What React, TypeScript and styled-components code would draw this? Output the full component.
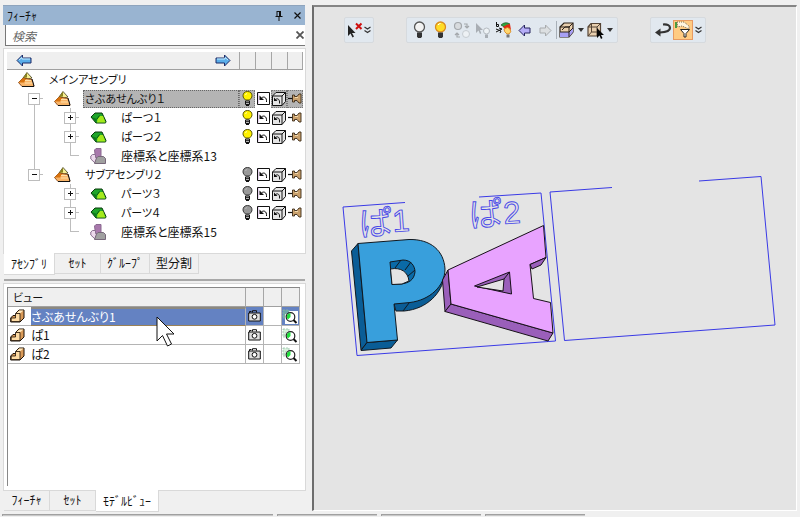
import React from "react";
import styled, { createGlobalStyle, css } from "styled-components";

const GlobalStyle = createGlobalStyle`
  * { box-sizing: border-box; }
  body {
    margin: 0;
    background: #f0f0f0;
    color: #111;
    font-family: "Noto Sans CJK JP", "Noto Sans", sans-serif;
    font-size: 12px;
    line-height: 16px;
    overflow: hidden;
  }
  button, input, table { font: inherit; color: inherit; }
  button { border: 0; padding: 0; background: none; }
  svg { display: block; flex: none; }
`;

const Window = styled.div`
  display: flex;
  flex-direction: column;
  height: 100vh;
`;

const Workspace = styled.main`
  display: flex;
  flex: 1;
  min-height: 0;
  gap: 6px;
  padding: 5px 3px 2px 3px;
`;

const Side = styled.aside`
  display: flex;
  flex-direction: column;
  flex: none;
  width: 303px;
`;

const TitleBar = styled.header`
  display: flex;
  align-items: center;
  gap: 8px;
  height: 20px;
  margin-right: 1px;
  padding: 0 3px 0 4px;
  background: #99b4d1;
  border-top: 1px solid #8ea4bd;
`;

const Title = styled.h1`
  flex: 1;
  margin: 0;
  font-size: 12px;
  font-weight: 400;
`;

const IconButton = styled.button`
  display: flex;
  align-items: center;
  justify-content: center;
  min-width: 10px;
  height: 16px;
`;

const SearchBar = styled.div`
  display: flex;
  align-items: center;
  height: 21px;
  margin: 0 1px 0 2px;
  background: #fff;
  border-left: 1px solid #777;
  border-bottom: 1px solid #777;
`;

const SearchInput = styled.input`
  flex: 1;
  min-width: 0;
  height: 18px;
  padding: 0 6px;
  border: 0;
  outline: 0;
  background: transparent;
  font-style: italic;
  &::placeholder { color: #666; opacity: 1; }
`;

const Pane = styled.section<{ $grow?: boolean }>`
  display: flex;
  flex-direction: column;
  flex: ${(p) => (p.$grow ? "1" : "none")};
  min-height: 0;
  margin-top: 2px;
  padding: 3px 2px 0 3px;
  background: #fff;
  border: 1px solid #d9d9d9;
`;

const TreeHeader = styled.div`
  display: flex;
  height: 18px;
  background: #efefef;
  border-bottom: 1px solid #a0a0a0;
`;

const HeaderNav = styled.div`
  display: flex;
  flex: 1;
  align-items: center;
  justify-content: space-between;
  padding: 0 8px 0 9px;
`;

const HeaderCell = styled.div`
  width: 16px;
  border-left: 1px solid #a6a6a6;
  &:last-child { border-right: 1px solid #a6a6a6; }
`;

const Tree = styled.div`
  padding: 0 0 12px;
`;

const TreeRow = styled.div`
  display: flex;
  align-items: center;
  height: 19px;
  padding-left: 9px;
`;

type GuideKind = "line" | "blank" | "node" | "elbow" | "first";

const Guide = styled.span<{ $kind: GuideKind }>`
  display: flex;
  align-items: center;
  justify-content: center;
  align-self: stretch;
  width: 36px;
  ${(p) => {
    const v = "linear-gradient(#bdbdbd, #bdbdbd) 18px 0 / 1px";
    const h = "linear-gradient(#bdbdbd, #bdbdbd) 18px 9px / 9px 1px no-repeat";
    if (p.$kind === "line") return css`background: ${v} 100% no-repeat;`;
    if (p.$kind === "node") return css`background: ${v} 100% no-repeat, ${h};`;
    if (p.$kind === "elbow") return css`background: ${v} 9px no-repeat, ${h};`;
    if (p.$kind === "first") return css`background: linear-gradient(#bdbdbd, #bdbdbd) 18px 9px / 1px 10px no-repeat, ${h};`;
    return "";
  }}
`;

const Expander = styled.button`
  display: flex;
  align-items: center;
  justify-content: center;
  width: 12px;
  height: 12px;
  background: #fff;
  border: 1px solid #bdbdbd;
`;

const NodeIcon = styled.span`
  width: 31px;
  padding-left: 2px;
`;

const NodeLabel = styled.span<{ $selected?: boolean; $kanji?: boolean }>`
  flex: 1;
  height: 18px;
  padding-left: 2px;
  font-size: ${(p) => (p.$kanji ? 12 : 11)}px;
  line-height: 17px;
  white-space: nowrap;
  font-feature-settings: "palt";
  ${(p) =>
    p.$selected &&
    css`
      background: #b4b4b4;
      outline: 1px dotted #666;
      outline-offset: -1px;
    `}
`;

const ToggleCell = styled.button<{ $selected?: boolean }>`
  display: flex;
  align-items: center;
  justify-content: center;
  width: 16px;
  height: 18px;
  ${(p) =>
    p.$selected &&
    css`
      background: #b4b4b4;
      outline: 1px dotted #777;
      outline-offset: -1px;
    `}
`;

const Tabs = styled.div`
  display: flex;
  align-items: flex-start;
  margin-top: -1px;
  padding-left: 1px;
`;

const Tab = styled.button<{ $active?: boolean }>`
  min-width: 46px;
  height: 21px;
  padding: 0 6px;
  line-height: 18px;
  white-space: nowrap;
  border: 1px solid #d9d9d9;
  border-width: 0 1px 1px 0;
  ${(p) =>
    p.$active &&
    css`
      height: 22px;
      padding: 0 7px;
      background: #fff;
    `}
`;

const Splitter = styled.div`
  height: 2px;
  margin: 4px 1px 0;
  background: #a8a8a8;
`;

const ViewList = styled.div`
  flex: 1;
  margin-bottom: 4px;
  margin-right: 3px;
  border-left: 1px solid #888;
  border-top: 1px solid #888;
`;

const ViewTable = styled.table`
  width: 100%;
  table-layout: fixed;
  border-collapse: separate;
  border-spacing: 0;
  col.icon { width: 23px; }
  col.action { width: 18px; }
`;

const Th = styled.th`
  height: 19px;
  padding: 0 0 0 5px;
  background: #efefef;
  border-right: 1px solid #a6a6a6;
  border-bottom: 1px solid #a0a0a0;
  line-height: 16px;
  text-align: left;
  font-weight: 400;
  font-size: 11px;
  font-feature-settings: "palt";
`;

const Td = styled.td<{ $tone?: "selected" | "active"; $divided?: boolean }>`
  position: relative;
  height: 19px;
  padding: 0;
  line-height: 16px;
  white-space: nowrap;
  font-feature-settings: "palt";
  border-bottom: 1px solid #b4b4b4;
  border-right: ${(p) => (p.$divided ? "1px solid #b4b4b4" : "0")};
  ${(p) =>
    p.$tone === "selected" &&
    css`
      color: #fff;
      background: #6482c2;
      border-top: 2px solid #8b8880;
      border-bottom-color: #9a8155;
    `}
  ${(p) => p.$tone === "active" && css`background: #6482c2;`}
`;

const IconTd = styled(Td)`
  padding-left: 2px;
`;

const Pointer = styled.svg`
  position: absolute;
  z-index: 1;
  left: 125px;
  top: 7px;
`;

const Viewport = styled.section`
  position: relative;
  flex: 1;
  min-width: 0;
  margin-bottom: 1px;
  background: #e4e4e4;
  border-left: 2px solid #6d6d6d;
  border-top: 2px solid #858585;
  border-right: 1px solid #fff;
  border-bottom: 1px solid #fff;
`;

const Scene = styled.svg`
  width: 100%;
  height: 100%;
`;

const ToolbarDock = styled.div`
  position: absolute;
  left: 30px;
  top: 10px;
  display: flex;
  gap: 32px;
`;

const Toolbar = styled.div`
  display: flex;
  align-items: center;
  height: 26px;
  padding: 0 2px;
  background: #e1e8ef;
  border: 1px solid #d6dade;
  border-radius: 2px;
`;

const Tool = styled.button<{ $w?: number; $on?: boolean }>`
  display: flex;
  align-items: center;
  justify-content: center;
  width: ${(p) => p.$w ?? 21}px;
  height: 20px;
  ${(p) =>
    p.$on &&
    css`
      background: #ffcb83;
      border: 1px solid #e79a62;
    `}
`;

const ToolDivider = styled.span`
  width: 1px;
  height: 18px;
  background: #a8b0b8;
`;

const StatusBar = styled.footer`
  display: grid;
  grid-template-columns: 271px 100px 100px 100px;
  gap: 4px;
  height: 3px;
  padding: 0 2px;
`;

const StatusCell = styled.div`
  border-top: 1px solid #a0a0a0;
  border-left: 1px solid #a0a0a0;
  background: #c8c8c8;
  height: 2px;
`;

/* ---------- icons ---------- */

const NavArrow = ({ right }: { right?: boolean }) => (
  <svg width="16" height="13" viewBox="0 0 16 13">
    <g transform={right ? "translate(16 0) scale(-1 1)" : undefined}>
      <path d="M1 6.5 6.5 1v3H15v5H6.500v3Z" fill="#5aaeea" stroke="#1d2a66" />
      <path d="M3 6 6 3.500V5h8" fill="none" stroke="#c4ecff" />
    </g>
  </svg>
);

const AssemblyIcon = () => (
  <svg width="17" height="15" viewBox="0 0 17 15">
    <path d="M9 .5 5 6l5 1 4-1Z" fill="#f6ef92" stroke="#3c3720" strokeWidth=".8" />
    <path d="M9 .5 5 6l4-.5Z" fill="#8a8420" />
    <path d="M5 6 .5 10.500 4 14.500h12L14 7.500Z" fill="#f8b468" stroke="#7a3605" strokeWidth=".8" />
    <path d="M5 6 .5 10.500H6L8 7Z" fill="#d8720e" />
    <path d="M7 11h8M7 8.500h6" stroke="#ffe0a8" />
    <path d="M4 14.500h12M14 7l2 7" stroke="#111" fill="none" />
  </svg>
);

const PartIcon = () => (
  <svg width="17" height="12" viewBox="0 0 17 12">
    <path d="M1 5 5 1h7l4 8.500-.5 1.500H6Z" fill="#1fa52a" stroke="#0a3a0c" />
    <path d="M7.500 7 10 4h3l2.500 6.500H7Z" fill="#a4ea1c" />
    <path d="M1.500 5 7 7l-1 3.500Z" fill="#0c7a1c" />
    <path d="M7 7 9.500 3.500" stroke="#0a5a0c" />
  </svg>
);

const AxisIcon = () => (
  <svg width="17" height="16" viewBox="0 0 17 16">
    <path d="M4.500 2 6 .5h5v9H5.500Z" fill="#a878ac" stroke="#8a6a90" />
    <path d="M.8 8 2.500 6.500h3v3l1.500 1-2 4.500-4.200-4Z" fill="#ecd9ec" stroke="#8a7090" />
    <path d="m6.500 10 1.500-1.500h5.500l2 2v5H4.500Z" fill="#a0a0a0" stroke="#77687a" />
  </svg>
);

const TreeBulb = ({ on }: { on?: boolean }) => (
  <svg width="11" height="15" viewBox="0 0 11 15">
    <path d="M5.500.500C2.500.500 1 2.500 1 4.800c0 2 1.500 3 2.500 4.200h4C8.500 7.800 10 6.800 10 4.800 10 2.500 8.500.500 5.500.500Z" fill={on ? "#fff200" : "#999"} stroke={on ? "#575300" : "#333"} />
    <path d="M3.500 10h4v3.500h-4Z" fill="#ddd" stroke="#111" />
    <path d="M4 11.700h3M4 14.500h3" stroke="#111" />
    <path d="M3.500 4Q4 2.500 5 2.500" fill="none" stroke={on ? "#ffffb0" : "#bbb"} />
  </svg>
);

const UndoBox = () => (
  <svg width="13" height="13" viewBox="0 0 13 13">
    <path d="M.5.500h12v12H.5Z" fill="#fff" stroke="#111" />
    <path d="M1.500 1v10.500" stroke="#e7d2f1" />
    <path d="M2.500 3.500V8H7Z" fill="#111" />
    <path d="M4.500 6C6.500 4 10 5 9.500 10" fill="none" stroke="#111" />
  </svg>
);

const UndoCube = () => (
  <svg width="14" height="14" viewBox="0 0 14 14">
    <path d="M.5 4 4 .5h9.500v9L10 13.500H.5Z" fill="#e6e6e6" stroke="#111" />
    <path d="M.5 4H10v9.500M10 4l3.500-3.500" fill="none" stroke="#111" />
    <path d="M2 5.500V9h3.500Z" fill="#111" />
    <path d="M3.500 7.500C5.500 6 8 7 7.500 11.500" fill="none" stroke="#111" />
  </svg>
);

const PushPin = () => (
  <svg width="14" height="11" viewBox="0 0 14 11">
    <path d="M0 5.500h5" stroke="#111" strokeWidth="1.200" />
    <path d="M4.500 2h2v1.500H9l2-2.500h2v9h-2L9 7.500H6.500V9h-2Z" fill="#c9a06c" stroke="#3b2a17" strokeWidth=".9" />
    <path d="M7 4.500h3" stroke="#f0d8ac" />
  </svg>
);

const StepIcon = () => (
  <svg width="15" height="14" viewBox="0 0 15 14">
    <path d="M.7 9 3 6.500h3V4L9 1h5v8l-4 4H.7Z" fill="#d99a58" stroke="#1d1208" />
    <path d="M1.200 9H5.500V4.500H10V12.500H1.200Z" fill="#ffdca4" stroke="#1d1208" strokeWidth=".8" />
    <path d="M6.500 4 9.300 1.500H13.500L10.500 4Z" fill="#ffe9bd" />
  </svg>
);

const CameraIcon = () => (
  <svg width="13" height="12" viewBox="0 0 13 12">
    <path d="M4.500 2.500V.7h4v1.800M1.500 3V1.500h2" fill="none" stroke="#111" />
    <path d="M.7 3h11.600v8H.7Z" fill="#ddd" stroke="#111" />
    <circle cx="6.500" cy="6.800" r="2.400" fill="#fff" stroke="#111" />
  </svg>
);

const ZoomIcon = ({ lit }: { lit?: boolean }) => (
  <svg width="16" height="15" viewBox="0 0 16 15">
    {lit && <path d="M3 2h13v13H3Z" fill="#fff" />}
    <path d="M1 1h6v4H3v4H1Z" fill={lit ? "#6ea6a8" : "#d7f0dc"} stroke="#8cbca2" strokeWidth=".7" strokeDasharray="2 1" />
    <circle cx="8.500" cy="8" r="4.300" fill="#fff" stroke="#222" strokeWidth="1.200" />
    <path d="M8.500 8V4.300A3.700 3.700 0 0 0 4.800 8 3.700 3.700 0 0 0 6 10.500Z" fill="#1fe03c" />
    <path d="m11.500 11 3 3" stroke="#111" strokeWidth="2" />
  </svg>
);

const ToolBulb = ({ fill }: { fill: string }) => (
  <svg width="13" height="18" viewBox="0 0 13 18">
    <circle cx="6.500" cy="6" r="5" fill={fill} stroke={fill === "#f2f2f2" ? "#555" : "#d98b20"} strokeWidth="1.300" />
    <path d="M4 11.500h5v4l-1 1.500H5l-1-1.500Z" fill="#333" />
    <path d="M4 4Q5 2.500 6.500 2.500" fill="none" stroke="#fff" />
  </svg>
);

const Chevrons = () => (
  <svg width="7" height="8" viewBox="0 0 7 8">
    <path d="m.5 1 3 2 3-2m-6 3.500 3 2 3-2" fill="none" stroke="#333" strokeWidth="1.200" />
  </svg>
);

const Caret = () => (
  <svg width="6" height="4" viewBox="0 0 6 4"><path d="M0 0h6L3 4Z" fill="#333" /></svg>
);

const ClearSelect = () => (
  <svg width="16" height="16" viewBox="0 0 16 16">
    <path d="M1 3v11l2.500-2.500L5.500 15.500 7 14.500 5 11h3.500Z" fill="#222" />
    <path d="m9 1.500 5.500 5.500m0-5.500L9 7" stroke="#cf1010" strokeWidth="2" />
  </svg>
);

const SwapIcon = () => (
  <svg width="18" height="18" viewBox="0 0 18 18">
    <circle cx="5" cy="5" r="3.500" fill="#d8dbde" stroke="#a4a8ac" strokeWidth="1.200" />
    <circle cx="13" cy="13" r="3.500" fill="#edf1f4" stroke="#c6ccd1" />
    <path d="M11 3h3v4m-2-2 2 2 2-2M7 16H4v-4m-2 2 2-2 2 2" fill="none" stroke="#a4a8ac" strokeWidth="1.200" />
  </svg>
);

const PickBulb = () => (
  <svg width="17" height="17" viewBox="0 0 17 17">
    <path d="M2 1v10l2.500-2.500L6 12l1.300-.7L6 8h3Z" fill="#a9aeb4" />
    <circle cx="12.500" cy="9" r="3" fill="#edf2f5" stroke="#b4bac0" />
    <path d="M11 12.500h3v3.500h-3Z" fill="#a9aeb4" />
  </svg>
);

const ColorBulb = () => (
  <svg width="17" height="18" viewBox="0 0 17 18">
    <path d="M6 4Q10 0 15 3l-4 4Z" fill="#31a43d" stroke="#184d1f" strokeWidth=".7" />
    <path d="M8 6q4-3 7-3l1 6-3-2-3 1Z" fill="#e32914" />
    <path d="M9 8q4-3 6 0 2 3-1 5h-2q-3-2-3-5Z" fill="#ffd76e" stroke="#d47c15" strokeWidth=".8" />
    <path d="M11.500 13.500h3v3h-3Z" fill="#777" />
    <path d="M1.500 1v4.500h2V3.500h-2M1 11l6-3-3-1M1 8l5 2-1 2" fill="none" stroke="#111" />
  </svg>
);

const BlockArrow = ({ right }: { right?: boolean }) => (
  <svg width="13" height="13" viewBox="0 0 13 13">
    <path
      d={right ? "M12 6.500 6.500 1v3H1v5h5.500v3Z" : "M1 6.500 6.500 1v3H12v5H6.500v3Z"}
      fill={right ? "#dcdfe1" : "#b5adf7"}
      stroke={right ? "#a8abad" : "#26245e"}
    />
  </svg>
);

const SectionCube = () => (
  <svg width="15" height="16" viewBox="0 0 15 16">
    <path d="M1 5 5 1h9v9l-4 5H1Z" fill="#e8cfae" stroke="#2b2118" strokeWidth="1.200" />
    <path d="M1 10h9l4-4v4l-4 5H1Z" fill="#a8a0f4" />
    <path d="M1 5h9v10M10 5l4-4M1 10h9l4-4M3 8l3-3h5" fill="none" stroke="#2b2118" />
  </svg>
);

const CubePick = () => (
  <svg width="17" height="17" viewBox="0 0 17 17">
    <path d="M1 5 4 1.500h9.500V10L10 14H1Z" fill="#e8cfae" stroke="#554434" strokeWidth="1.200" />
    <path d="M1 5h9v9M10 5l3.500-3.500M4.500 1.500V10h9M1 14l3.500-4" fill="none" stroke="#554434" />
    <path d="M10 6v10l2.500-2.500L14 17l1.500-1-1.500-3h3Z" fill="#050505" />
  </svg>
);

const ReturnIcon = () => (
  <svg width="18" height="14" viewBox="0 0 18 14">
    <path d="M9 1.500q7-.5 7 3.500T6 9.500" fill="none" stroke="#333" strokeWidth="2.200" />
    <path d="M1 9.500 6.500 5.500v8Z" fill="#333" />
  </svg>
);

const FilterIcon = () => (
  <svg width="18" height="18" viewBox="0 0 18 18">
    <path d="M1 1h2v6H1Z" fill="#4b9b3d" />
    <path d="M3 1h7l5 4v3L8 5 4 6Z" fill="#fff5df" stroke="#7b6b55" strokeDasharray="1 1" />
    <path d="M6.500 8.500h9l-3.500 4V16h-2v-3.500Z" fill="#fff" stroke="#222" />
  </svg>
);

/* ---------- data ---------- */

type Kind = "assembly" | "part" | "axis";
interface TreeItem {
  label: string;
  kind: Kind;
  guides: GuideKind[];
  expand?: "+" | "-";
  lit?: boolean;
  selected?: boolean;
}

const treeItems: TreeItem[] = [
  { label: "メインアセンブリ", kind: "assembly", guides: [] },
  { label: "さぶあせんぶり１", kind: "assembly", guides: ["first"], expand: "-", lit: true, selected: true },
  { label: "ぱーつ１", kind: "part", guides: ["line", "node"], expand: "+", lit: true },
  { label: "ぱーつ２", kind: "part", guides: ["line", "node"], expand: "+", lit: true },
  { label: "座標系と座標系13", kind: "axis", guides: ["line", "elbow"] },
  { label: "サブアセンブリ２", kind: "assembly", guides: ["elbow"], expand: "-" },
  { label: "パーツ３", kind: "part", guides: ["blank", "node"], expand: "+" },
  { label: "パーツ４", kind: "part", guides: ["blank", "node"], expand: "+" },
  { label: "座標系と座標系15", kind: "axis", guides: ["blank", "elbow"] },
];

const views = ["さぶあせんぶり1", "ぱ1", "ぱ2"];

const kindIcon: Record<Kind, React.ReactNode> = {
  assembly: <AssemblyIcon />,
  part: <PartIcon />,
  axis: <AxisIcon />,
};

const FeatureRow = ({ item }: { item: TreeItem }) => (
  <TreeRow role="treeitem" aria-selected={!!item.selected}>
    {item.guides.map((kind, i) => (
      <Guide key={i} $kind={kind}>
        {item.expand && i === item.guides.length - 1 && (
          <Expander aria-label={item.expand === "+" ? "展開" : "折りたたみ"}>
            <svg width="7" height="7" viewBox="0 0 7 7">
              <path d={item.expand === "+" ? "M1 3.500h5M3.500 1v5" : "M1 3.500h5"} stroke="#111" />
            </svg>
          </Expander>
        )}
      </Guide>
    ))}
    <NodeIcon>{kindIcon[item.kind]}</NodeIcon>
    <NodeLabel $selected={item.selected} $kanji={item.kind === "axis"}>{item.label}</NodeLabel>
    {item.expand && (
      <>
        <ToggleCell $selected={item.selected} aria-label="表示"><TreeBulb on={item.lit} /></ToggleCell>
        <ToggleCell aria-label="戻す"><UndoBox /></ToggleCell>
        <ToggleCell $selected={item.selected} aria-label="形状を戻す"><UndoCube /></ToggleCell>
        <ToggleCell $selected={item.selected} aria-label="固定"><PushPin /></ToggleCell>
      </>
    )}
  </TreeRow>
);

const ModelScene = () => (
  <Scene aria-label="モデル">
    <g transform="translate(-314 -7)" strokeLinejoin="round">
      <g fill="none" stroke="#3a3ae6" strokeWidth="1">
        <path d="M405 202.500 343 207l14 148.500L555.500 341 541 193l-62 4" />
        <path d="M612 187.500 550 192l14.500 148.500L775 325 761 176.500l-62 4.500" />
      </g>
      <g fill="none" stroke="#4747e8" strokeWidth=".9" fontFamily="'Noto Sans CJK JP', sans-serif" fontSize="33">
        <text transform="translate(360 236) rotate(-4)">ぱ</text>
        <text transform="translate(393 232) rotate(-4)" fontFamily="'Liberation Sans', sans-serif" fontSize="31">1</text>
        <text transform="translate(470 227) rotate(-4)">ぱ</text>
        <text transform="translate(504 224) rotate(-4)" fontFamily="'Liberation Sans', sans-serif" fontSize="31">2</text>
      </g>
      <g stroke="#101820" strokeWidth="1">
        <path d="M394 304 396 311h8C428 309 442 292 444 277L430 290Z" fill="#0a5d96" />
        <path d="M358 243.500 351.500 251 361 350l6-7.500Z" fill="#0a5d96" />
        <path d="m367 342.500-6 8 30-2.500 6.500-8Z" fill="#0a5d96" />
        <path d="M358 243.500 409 239.500C431 239 444 251 445 269 445 286 430 300 410 302.500L394 304 397.500 340 367 342.500Z" fill="#389fdc" />
        <path d="M390 262 403 260C411 260 415 266 415 272 414 280 409 283 401 284L392 284.500Z" fill="#0a6aa7" />
        <path d="M390.500 269C401 267 408 272 409 281L402 284 392 284.500Z" fill="#e4e4e4" />
        <path d="m395 268 6-8m4 10 6-8m-3 14 7-6M403 311l6-8" fill="none" />
      </g>
      <g stroke="#171018" strokeWidth="1">
        <path d="M448 270 442.500 280 445 311.500 451 304Z" fill="#9a5fba" />
        <path d="m451 304-6 7.500 103 29.500 5-8Z" fill="#9a5fba" />
        <path d="M448 270 543.500 225.500 546 257.500 530 264.500 533.500 298.500 550.500 302.500 553 333 451 304Z" fill="#e8a3ff" />
        <path d="M530 264.500 546 257.500 541 265 532 269Z" fill="#9a5fba" />
        <path d="m474.500 286 35-14 2 22Z" fill="#9a5fba" />
        <path d="m477 287 27-8-1 12Z" fill="#e4e4e4" />
        <path d="m504 279 5.500-7" fill="none" />
      </g>
    </g>
  </Scene>
);

export default function App() {
  return (
    <>
      <GlobalStyle />
      <Window>
        <Workspace>
          <Side>
            <TitleBar>
              <Title>ﾌｨｰﾁｬ</Title>
              <IconButton aria-label="ピン留め">
                <svg width="8" height="10" viewBox="0 0 8 10"><path d="M2 0v5.500m3.500-5.500v5.500M4.500 0v5.500M2 .500h4M.5 5.500h7M4 6v4" fill="none" stroke="#111" /></svg>
              </IconButton>
              <IconButton aria-label="閉じる">
                <svg width="7" height="7" viewBox="0 0 7 7"><path d="m.5.500 6 6m0-6-6 6" stroke="#111" strokeWidth="1.200" /></svg>
              </IconButton>
            </TitleBar>
            <SearchBar>
              <SearchInput aria-label="検索" placeholder="検索" />
              <IconButton aria-label="クリア">
                <svg width="8" height="8" viewBox="0 0 8 8"><path d="m.5.500 7 7m0-7-7 7" stroke="#555" strokeWidth="1.800" /></svg>
              </IconButton>
            </SearchBar>
            <Pane>
              <TreeHeader>
                <HeaderNav>
                  <IconButton aria-label="前へ"><NavArrow /></IconButton>
                  <IconButton aria-label="次へ"><NavArrow right /></IconButton>
                </HeaderNav>
                <HeaderCell /><HeaderCell /><HeaderCell /><HeaderCell />
              </TreeHeader>
              <Tree role="tree">
                {treeItems.map((item) => <FeatureRow key={item.label} item={item} />)}
              </Tree>
            </Pane>
            <Tabs>
              <Tab $active>ｱｾﾝﾌﾞﾘ</Tab>
              <Tab>ｾｯﾄ</Tab>
              <Tab>ｸﾞﾙｰﾌﾟ</Tab>
              <Tab>型分割</Tab>
            </Tabs>
            <Splitter />
            <Pane $grow>
              <ViewList>
                <ViewTable>
                  <colgroup>
                    <col className="icon" /><col /><col className="action" /><col className="action" /><col className="action" />
                  </colgroup>
                  <thead>
                    <tr><Th colSpan={2}>ビュー</Th><Th /><Th /><Th /></tr>
                  </thead>
                  <tbody>
                    {views.map((name, i) => (
                      <tr key={name}>
                        <IconTd><StepIcon /></IconTd>
                        <Td $divided $tone={i === 0 ? "selected" : undefined}>
                          {name}
                          {i === 0 && (
                            <Pointer width="19" height="31" viewBox="0 0 19 31" aria-hidden="true">
                              <path d="M1 1v24l5.500-5.500L11.500 30l4-2-5-10H18Z" fill="#fff" stroke="#111" />
                            </Pointer>
                          )}
                        </Td>
                        <IconTd $divided $tone={i === 0 ? "active" : undefined}><IconButton aria-label="撮影"><CameraIcon /></IconButton></IconTd>
                        <Td $divided />
                        <Td $divided $tone={i === 0 ? "active" : undefined}><IconButton aria-label="拡大"><ZoomIcon lit={i === 0} /></IconButton></Td>
                      </tr>
                    ))}
                  </tbody>
                </ViewTable>
              </ViewList>
            </Pane>
            <Tabs>
              <Tab>ﾌｨｰﾁｬ</Tab>
              <Tab>ｾｯﾄ</Tab>
              <Tab $active>ﾓﾃﾞﾙﾋﾞｭｰ</Tab>
            </Tabs>
          </Side>
          <Viewport>
            <ModelScene />
            <ToolbarDock>
              <Toolbar>
                <Tool $w={16} aria-label="選択解除"><ClearSelect /></Tool>
                <Tool $w={8} aria-label="その他"><Chevrons /></Tool>
              </Toolbar>
              <Toolbar>
                <Tool aria-label="非表示"><ToolBulb fill="#f2f2f2" /></Tool>
                <Tool aria-label="表示"><ToolBulb fill="#ffdc27" /></Tool>
                <Tool aria-label="反転"><SwapIcon /></Tool>
                <Tool aria-label="選択表示"><PickBulb /></Tool>
                <Tool aria-label="色表示"><ColorBulb /></Tool>
                <Tool aria-label="前へ"><BlockArrow /></Tool>
                <Tool aria-label="次へ"><BlockArrow right /></Tool>
                <ToolDivider />
                <Tool $w={19} aria-label="断面"><SectionCube /></Tool>
                <Tool $w={10} aria-label="断面メニュー"><Caret /></Tool>
                <Tool $w={19} aria-label="選択"><CubePick /></Tool>
                <Tool $w={10} aria-label="選択メニュー"><Caret /></Tool>
              </Toolbar>
              <Toolbar>
                <Tool $w={20} aria-label="戻る"><ReturnIcon /></Tool>
                <Tool $w={20} $on aria-label="フィルタ"><FilterIcon /></Tool>
                <Tool $w={10} aria-label="その他"><Chevrons /></Tool>
              </Toolbar>
            </ToolbarDock>
          </Viewport>
        </Workspace>
        <StatusBar><StatusCell /><StatusCell /><StatusCell /><StatusCell /></StatusBar>
      </Window>
    </>
  );
}
